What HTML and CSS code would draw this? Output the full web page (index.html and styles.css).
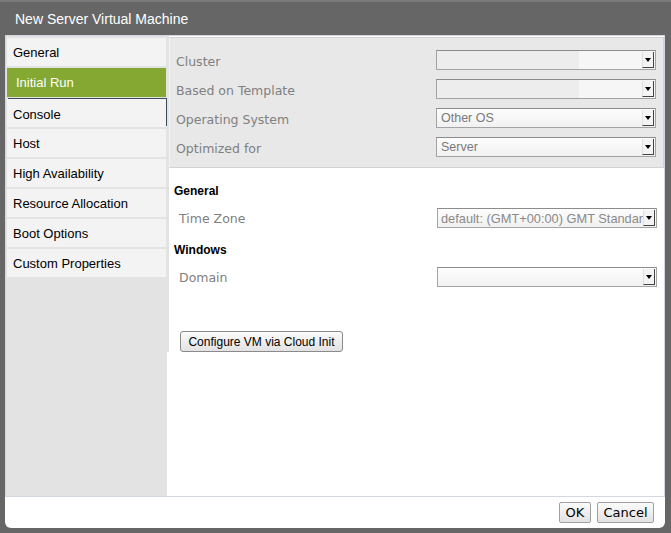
FILE: index.html
```html
<!DOCTYPE html>
<html>
<head>
<meta charset="utf-8">
<link rel="stylesheet" href="styles.css">
</head>
<body>
<div class="title">New Server Virtual Machine</div>
<div class="dialog">
  <div class="frame">
    <div class="nav">
      <div class="item">General</div>
      <div class="item active">Initial Run</div>
      <div class="item marked">Console</div>
      <div class="item">Host</div>
      <div class="item">High Availability</div>
      <div class="item">Resource Allocation</div>
      <div class="item">Boot Options</div>
      <div class="item">Custom Properties</div>
    </div>
    <div class="content">
      <div class="panel">
        <div class="graybox">
          <div class="row"><span class="label">Cluster</span><div class="select split"><span class="val"></span><span class="arrow"></span></div></div>
          <div class="row"><span class="label">Based on Template</span><div class="select split"><span class="val"></span><span class="arrow"></span></div></div>
          <div class="row"><span class="label">Operating System</span><div class="select"><span class="val">Other OS</span><span class="arrow"></span></div></div>
          <div class="row"><span class="label">Optimized for</span><div class="select"><span class="val">Server</span><span class="arrow"></span></div></div>
        </div>
        <div class="section-title first">General</div>
        <div class="row lower"><span class="label">Time Zone</span><div class="select"><span class="val light">default: (GMT+00:00) GMT Standard</span><span class="arrow"></span></div></div>
        <div class="section-title">Windows</div>
        <div class="row lower"><span class="label">Domain</span><div class="select"><span class="val"></span><span class="arrow"></span></div></div>
        <button class="btn cloud">Configure VM via Cloud Init</button>
      </div>
    </div>
  </div>
  <div class="footer">
    <button class="btn foot ok">OK</button>
    <button class="btn foot cancel">Cancel</button>
  </div>
</div>
</body>
</html>
```
FILE: styles.css
```css
html, body {
  margin: 0;
  padding: 0;
}
body {
  width: 671px;
  height: 533px;
  overflow: hidden;
  background: #666666;
  font-family: "Liberation Sans", Arial, sans-serif;
}
.title {
  height: 35px;
  box-sizing: border-box;
  padding: 9px 0 0 15px;
  color: #ffffff;
  font-size: 14px;
  line-height: 16px;
  border-top: 2px solid #7a7a7a;
}
.dialog {
  margin: 0 6px 0 5px;
  height: 493px;
  background: #ffffff;
  border-radius: 0 0 6px 6px;
  display: flex;
  flex-direction: column;
}
.frame {
  height: 462px;
  box-sizing: border-box;
  border: 1px solid #d3d8e0;
  display: flex;
}
.nav {
  width: 161px;
  box-sizing: border-box;
  background: #e3e3e3;
  padding: 2px 1px 1px 1px;
  display: flex;
  flex-direction: column;
  gap: 2px;
}
.item {
  height: 28px;
  box-sizing: border-box;
  background: #f3f3f3;
  padding: 1px 0 0 6px;
  font-size: 13px;
  line-height: 28px;
  color: #000;
}
.item.active {
  background: #84a832;
  color: #ffffff;
  padding: 0 0 0 9px;
  height: 29px;
  line-height: 29px;
}
.item.marked {
  padding-top: 2px;
  box-shadow: 1px -1px 0 #3e4a5a;
}
.content {
  flex: 1;
  display: flex;
  flex-direction: column;
}
.panel {
  border-left: 2px solid #e3e3e3;
  padding-top: 1px;
  display: flex;
  flex-direction: column;
  align-items: stretch;
}
.graybox {
  background: #e8e8e8;
  border: 1px solid #d2d2d2;
  border-left-color: #f4f4f4;
  padding: 12px 7px 10px 6px;
  display: flex;
  flex-direction: column;
  gap: 9px;
}
.row {
  display: flex;
  align-items: center;
  justify-content: space-between;
  height: 20px;
}
.label {
  font-family: "DejaVu Sans", Verdana, sans-serif;
  font-size: 12.5px;
  color: #808080;
  padding-top: 2px;
}
.row.lower {
  margin-top: 9px;
  padding: 0 7px 0 10px;
}
.row.lower .label {
  padding-top: 0;
}
.section-title {
  margin-top: 13px;
  padding: 1px 0 0 5px;
  font-size: 12px;
  font-weight: bold;
  line-height: 16px;
  color: #000;
}
.section-title.first {
  margin-top: 14px;
}
.select {
  width: 220px;
  height: 20px;
  box-sizing: border-box;
  border: 1px solid #a3a3a3;
  border-top-color: #8c8c8c;
  background: linear-gradient(#fdfdfd, #f1f1f1);
  display: flex;
  align-items: center;
}
.select.split {
  background: linear-gradient(to right, #ededed 0, #ededed 65%, #f6f6f6 65%);
}
.val {
  flex: 1;
  overflow: hidden;
  white-space: nowrap;
  padding-left: 4px;
  font-size: 12.5px;
  color: #7a7a7a;
}
.val.light {
  color: #8a8a8a;
  padding-left: 3px;
  font-size: 12.8px;
}
.arrow {
  width: 12px;
  height: 16px;
  margin-right: 1px;
  flex: none;
  box-sizing: border-box;
  background: #f4f4f4;
  border-right: 1px solid #444;
  border-bottom: 1px solid #444;
  border-left: 1px solid #e0e0e0;
  display: flex;
  align-items: center;
  justify-content: center;
}
.arrow::after {
  content: "";
  width: 0;
  height: 0;
  border-left: 3px solid transparent;
  border-right: 3px solid transparent;
  border-top: 4px solid #000;
}
.btn {
  height: 21px;
  box-sizing: border-box;
  border: 1px solid #8a8a8a;
  border-radius: 3px;
  background: linear-gradient(#fbfbfb, #e2e2e2);
  color: #000;
  padding: 0;
  margin: 0;
}
.cloud {
  margin: 44px 0 0 11px;
  width: 163px;
  align-self: flex-start;
  font-family: "Liberation Sans", Arial, sans-serif;
  font-size: 12px;
}
.footer {
  display: flex;
  justify-content: flex-end;
  gap: 6px;
  padding: 5px 11px 0 0;
}
.foot {
  font-family: "DejaVu Sans", Verdana, sans-serif;
  font-size: 13px;
  padding: 0;
  border-color: #a0a0a0;
  border-radius: 2px;
}
.ok {
  width: 32px;
}
.cancel {
  width: 57px;
}
```
